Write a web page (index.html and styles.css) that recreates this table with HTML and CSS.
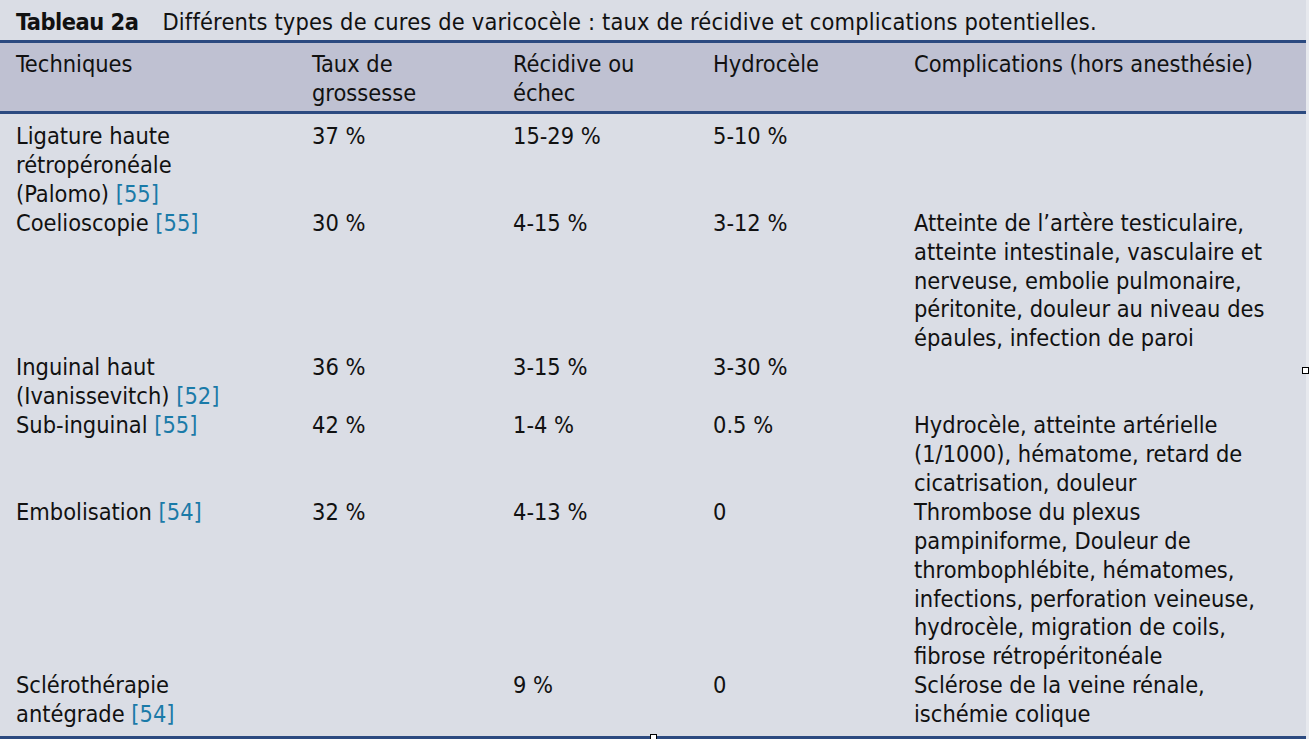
FILE: index.html
```html
<!DOCTYPE html>
<html lang="fr">
<head>
<meta charset="utf-8">
<title>Tableau 2a</title>
<link rel="stylesheet" href="styles.css">
</head>
<body>
<div class="sheet">
  <div class="caption"><span class="label">Tableau 2a</span><span class="caption-text">Différents types de cures de varicocèle : taux de récidive et complications potentielles.</span></div>
  <table class="data">
    <colgroup>
      <col class="c1"><col class="c2"><col class="c3"><col class="c4"><col class="c5">
    </colgroup>
    <thead>
      <tr>
        <th>Techniques</th>
        <th>Taux de<br>grossesse</th>
        <th>Récidive ou<br>échec</th>
        <th>Hydrocèle</th>
        <th>Complications (hors anesthésie)</th>
      </tr>
    </thead>
    <tbody>
      <tr>
        <td>Ligature haute<br>rétropéronéale<br>(Palomo) <span class="ref">[55]</span></td>
        <td>37 %</td>
        <td>15-29 %</td>
        <td>5-10 %</td>
        <td></td>
      </tr>
      <tr>
        <td>Coelioscopie <span class="ref">[55]</span></td>
        <td>30 %</td>
        <td>4-15 %</td>
        <td>3-12 %</td>
        <td>Atteinte de l’artère testiculaire,<br>atteinte intestinale, vasculaire et<br>nerveuse, embolie pulmonaire,<br>péritonite, douleur au niveau des<br>épaules, infection de paroi</td>
      </tr>
      <tr>
        <td>Inguinal haut<br>(Ivanissevitch) <span class="ref">[52]</span></td>
        <td>36 %</td>
        <td>3-15 %</td>
        <td>3-30 %</td>
        <td></td>
      </tr>
      <tr>
        <td>Sub-inguinal <span class="ref">[55]</span></td>
        <td>42 %</td>
        <td>1-4 %</td>
        <td>0.5 %</td>
        <td>Hydrocèle, atteinte artérielle<br>(1/1000), hématome, retard de<br>cicatrisation, douleur</td>
      </tr>
      <tr>
        <td>Embolisation <span class="ref">[54]</span></td>
        <td>32 %</td>
        <td>4-13 %</td>
        <td>0</td>
        <td>Thrombose du plexus<br>pampiniforme, Douleur de<br>thrombophlébite, hématomes,<br>infections, perforation veineuse,<br>hydrocèle, migration de coils,<br>fibrose rétropéritonéale</td>
      </tr>
      <tr>
        <td>Sclérothérapie<br>antégrade <span class="ref">[54]</span></td>
        <td></td>
        <td>9 %</td>
        <td>0</td>
        <td>Sclérose de la veine rénale,<br>ischémie colique</td>
      </tr>
    </tbody>
  </table>
  <span class="handle handle-right"></span>
  <span class="handle handle-bottom"></span>
</div>
</body>
</html>
```

FILE: styles.css
```css
html, body {
  margin: 0;
  padding: 0;
}
body {
  background: #e7e9ee;
  width: 1309px;
  height: 739px;
  overflow: hidden;
  font-family: "DejaVu Sans Condensed", "DejaVu Sans", sans-serif;
  font-stretch: condensed;
  font-size: 23.4px;
  line-height: 28.9px;
  color: #111111;
}
.sheet {
  position: relative;
  width: 1306px;
  height: 739px;
  background: #dadde5;
}
.caption {
  padding: 8px 0 0 16px;
  height: 32px;
  white-space: nowrap;
}
.label {
  font-weight: bold;
  letter-spacing: -0.5px;
  margin-right: 24px;
}
.caption-text {
  letter-spacing: 0.17px;
}
.data {
  width: 1306px;
  border-collapse: collapse;
  table-layout: fixed;
}
.c1 { width: 296px; }
.c2 { width: 201px; }
.c3 { width: 200px; }
.c4 { width: 201px; }
.c5 { width: 408px; }
.data thead tr {
  background: #bfc1d2;
  border-top: 3px solid #2c4a80;
  border-bottom: 3px solid #2c4a80;
}
.data th {
  font-weight: normal;
  text-align: left;
  vertical-align: top;
  padding: 7px 0 3px 16px;
  height: 58px;
  white-space: nowrap;
}
.data td {
  vertical-align: top;
  padding: 0 0 0 16px;
  white-space: nowrap;
}
.data tbody tr:first-child td {
  padding-top: 8px;
}
.data tbody tr:last-child td {
  padding-bottom: 7px;
}
.data tbody tr:last-child {
  border-bottom: 3px solid #2c4a80;
}
.ref {
  color: #1a7aa8;
}
.handle {
  position: absolute;
  width: 5px;
  height: 5px;
  background: #ffffff;
  border: 1px solid #000000;
}
.handle-right {
  left: 1302px;
  top: 367px;
}
.handle-bottom {
  left: 650px;
  top: 734px;
}
```
